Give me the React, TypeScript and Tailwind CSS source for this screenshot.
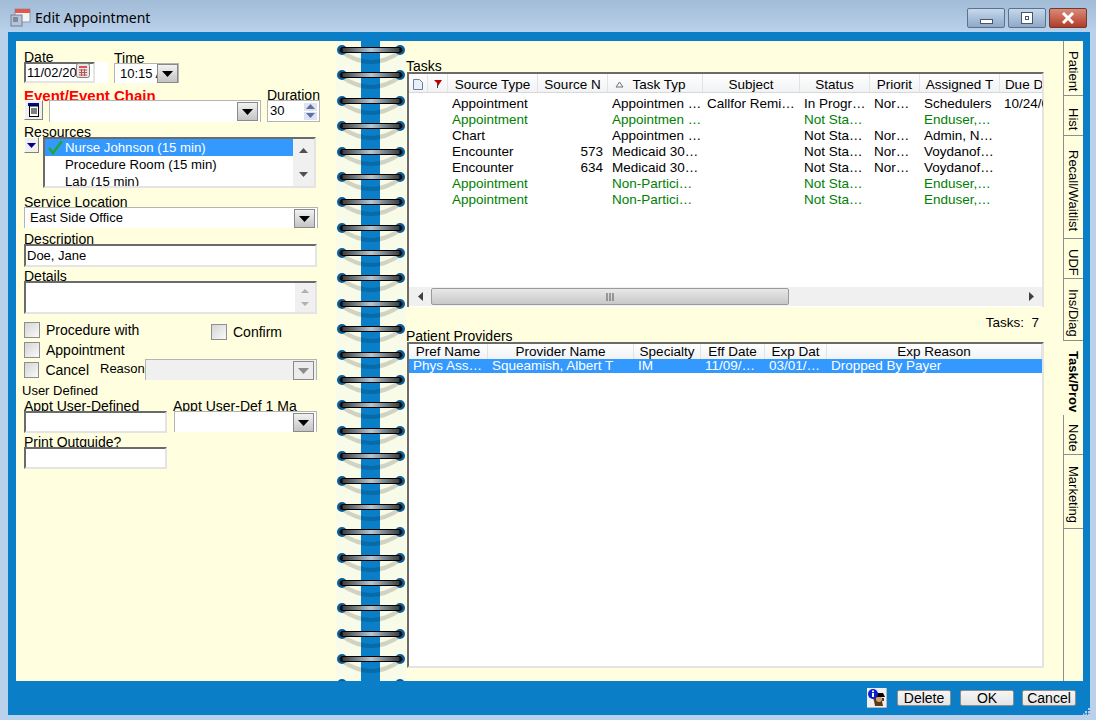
import type { ReactNode } from "react";

const sunken = "border-2 border-t-[#6b6b6b] border-l-[#6b6b6b] border-r-[#e4e4e4] border-b-[#e4e4e4] bg-white";

const taskCols = [
  { w: "w-[19px]" },
  { w: "w-[20px]" },
  { w: "w-[90px]", label: "Source Type" },
  { w: "w-[70px]", label: "Source N" },
  { w: "w-[95px]", label: "Task Typ" },
  { w: "w-[97px]", label: "Subject" },
  { w: "w-[70px]", label: "Status" },
  { w: "w-[50px]", label: "Priorit" },
  { w: "w-[80px]", label: "Assigned T" },
  { w: "w-[44px]", label: "Due D" },
];

const headPad: Record<string, string> = {
  "Task Typ": "pr-[9px]",
  "Due D": "pl-[5px]",
};

const black = "text-black";
const green = "text-[#008000]";

const taskRows = [
  { c: black, d: ["Appointment", "", "Appointmen …", "Callfor Remi…", "In Progr…", "Nor…", "Schedulers", "10/24/0"] },
  { c: green, d: ["Appointment", "", "Appointmen …", "", "Not Sta…", "", "Enduser,…", ""] },
  { c: black, d: ["Chart", "", "Appointmen …", "", "Not Sta…", "Nor…", "Admin, N…", ""] },
  { c: black, d: ["Encounter", "573", "Medicaid 30…", "", "Not Sta…", "Nor…", "Voydanof…", ""] },
  { c: black, d: ["Encounter", "634", "Medicaid 30…", "", "Not Sta…", "Nor…", "Voydanof…", ""] },
  { c: green, d: ["Appointment", "", "Non-Partici…", "", "Not Sta…", "", "Enduser,…", ""] },
  { c: green, d: ["Appointment", "", "Non-Partici…", "", "Not Sta…", "", "Enduser,…", ""] },
];

const provCols = [
  { w: "w-[79px]", label: "Pref Name", v: "Phys Ass…" },
  { w: "w-[146px]", label: "Provider Name", v: "Squeamish, Albert T" },
  { w: "w-[67px]", label: "Specialty", v: "IM" },
  { w: "w-[64px]", label: "Eff Date", v: "11/09/…" },
  { w: "w-[62px]", label: "Exp Dat", v: "03/01/…" },
  { w: "flex-1", label: "Exp Reason", v: "Dropped By Payer" },
];

const tabs = [
  { label: "Patient", h: "h-[55px]" },
  { label: "Hist", h: "h-[40px]" },
  { label: "Recall/Waitlist", h: "h-[103px]" },
  { label: "UDF", h: "h-[40px]" },
  { label: "Ins/Diag", h: "h-[62px]" },
  { label: "Task/Prov", h: "h-[74px]", active: true },
  { label: "Note", h: "h-[40px]" },
  { label: "Marketing", h: "h-[74px]" },
];

function Label({ children, className = "" }: { children: ReactNode; className?: string }) {
  return <div className={`h-[12px] text-[14px] leading-[15px] whitespace-nowrap ${className}`}>{children}</div>;
}

function DropButton({ disabled = false }: { disabled?: boolean }) {
  return (
    <div className={`flex h-[19px] w-[21px] shrink-0 items-center justify-center border border-[#8a8a8a] ${disabled ? "bg-[#ececec]" : "bg-gradient-to-b from-[#f2f2f2] to-[#c4c4c4]"}`}>
      <svg width="11" height="6" viewBox="0 0 11 6">
        <path d="M0 0h11L5.5 6z" fill={disabled ? "#8c8c8c" : "#000"} />
      </svg>
    </div>
  );
}

function Select({ className = "", value = "", disabled = false }: { className?: string; value?: string; disabled?: boolean }) {
  return (
    <div className={`relative z-10 flex items-end justify-between border border-[#b4b4b4] border-b-0 ${disabled ? "bg-[#f0f0f0]" : "bg-white"} ${className}`}>
      <span className="self-center pl-[5px] text-[13px]">{value}</span>
      <DropButton disabled={disabled} />
    </div>
  );
}

function Check({ label, className = "" }: { label?: string; className?: string }) {
  return (
    <div className={`flex items-center ${className}`}>
      <div className="h-[16px] w-[16px] border border-[#8e8e8e] bg-gradient-to-br from-[#d4d4d4] to-[#fafafa]" />
      {label && <span className="ml-[6px] text-[14px] leading-[16px]">{label}</span>}
    </div>
  );
}

function Ring() {
  return (
    <div className="h-[25.375px] shrink-0">
      <svg width="68" height="25" viewBox="0 0 68 25" className="block">
        <defs>
          <linearGradient id="bar" x1="0" x2="1" y1="0" y2="0">
            <stop offset="0" stopColor="#3a3a3a" />
            <stop offset="0.5" stopColor="#b4c8d4" />
            <stop offset="1" stopColor="#3a3a3a" />
          </linearGradient>
        </defs>
        <path d="M5 11 Q34 31 63 11" fill="none" stroke="#000" strokeOpacity="0.16" strokeWidth="4" />
        <circle cx="5" cy="9" r="5" fill="#0b5f96" />
        <circle cx="63" cy="9" r="5" fill="#0b5f96" />
        <circle cx="5" cy="9" r="2.5" fill="#111" />
        <circle cx="63" cy="9" r="2.5" fill="#111" />
        <rect x="5" y="6.5" width="58" height="5" fill="url(#bar)" stroke="#000" strokeWidth="1" />
      </svg>
    </div>
  );
}

function InfoIcon() {
  return (
    <svg width="20" height="20" viewBox="0 0 20 20" className="block">
      <rect width="20" height="20" fill="#f0f0f0" />
      <path d="M20 0v20H0" fill="none" stroke="#808080" />
      <path d="M6 10h11v3h-2l1 5H8l-1-5z" fill="#5a3a1c" />
      <circle cx="12" cy="11" r="3" fill="#d9a066" />
      <path d="M6 9h12l-2-4H9z" fill="#000" />
      <circle cx="6" cy="6" r="5" fill="#0a1fd0" />
      <rect x="5" y="5" width="2" height="4" fill="#fff" />
      <rect x="5" y="2.5" width="2" height="1.6" fill="#fff" />
    </svg>
  );
}

export default function App() {
  return (
    <div className="flex h-[720px] w-[1096px] flex-col overflow-hidden bg-[#b9d1ea] text-[13px] text-black [font-family:Liberation_Sans,Arial,sans-serif]">
      {/* title bar */}
      <div className="flex h-[32px] shrink-0 items-start bg-gradient-to-b from-[#a2bbd6] to-[#b9d1ea] pl-[10px] pr-[9px] pt-[8px]">
        <svg width="21" height="20" viewBox="0 0 21 20">
          <rect x="5" y="1" width="15" height="13" fill="#f4f4f4" stroke="#8a9ab0" />
          <rect x="5" y="1" width="15" height="4" fill="#e2574c" />
          <rect x="1" y="7" width="11" height="11" fill="#b8c4d4" stroke="#6f7f94" />
          <rect x="3" y="9" width="5" height="5" fill="#7d8b9e" />
        </svg>
        <span className="ml-[4px] text-[14px] leading-[20px] [font-family:Noto_Sans,sans-serif]">Edit Appointment</span>
        <div className="ml-auto flex gap-[3px]">
          <div className="flex h-[20px] w-[38px] items-end justify-center rounded-[2px] border border-[#5c7190] bg-gradient-to-b from-[#c6d8ec] to-[#8fa9c6] pb-[3px]">
            <div className="h-[5px] w-[13px] border border-[#45566e] bg-white" />
          </div>
          <div className="flex h-[20px] w-[38px] items-center justify-center rounded-[2px] border border-[#5c7190] bg-gradient-to-b from-[#c6d8ec] to-[#8fa9c6]">
            <div className="flex h-[12px] w-[12px] items-center justify-center border border-[#45566e] bg-white">
              <div className="h-[4px] w-[4px] border border-[#45566e]" />
            </div>
          </div>
          <div className="flex h-[20px] w-[38px] items-center justify-center rounded-[2px] border border-[#6e3a32] bg-gradient-to-b from-[#d98a78] to-[#b23a26]">
            <svg width="14" height="12" viewBox="0 0 14 12">
              <path d="M2 1l10 10M12 1L2 11" stroke="#fff" strokeWidth="3" />
            </svg>
          </div>
        </div>
      </div>

      {/* window body */}
      <div className="relative ml-[8px] mr-[6px] mb-[5px] flex flex-1 flex-col bg-[#0a7fc8] pt-[9px]">
        <div className="ml-[8px] mr-[7px] flex h-[640px] shrink-0 overflow-hidden bg-[#ffffdf]">
          {/* left form */}
          <div className="flex w-[320px] shrink-0 flex-col pl-[8px] pt-[9px]">
            <div className="flex">
              <div className="w-[90px]">
                <Label>Date</Label>
                <div className="flex">
                  <div className={`relative z-10 flex h-[21px] w-[71px] items-center pl-[1px] ${sunken}`}>
                    <span className="text-[13px]">11/02/20</span>
                    <svg width="14" height="15" viewBox="0 0 14 15" className="-ml-[1px] -mt-[4px] shrink-0">
                      <rect x="0.5" y="0.5" width="13" height="14" rx="2" fill="#e6e6e6" stroke="#808080" />
                      <rect x="3" y="3" width="8" height="2" fill="#d9534f" />
                      <path d="M3 7h8M3 9.500h8M3 12h8M5.500 6v7M8.500 6v7" stroke="#c05050" strokeWidth="1" />
                    </svg>
                  </div>
                  <div className="z-10 h-[21px] w-[13px] bg-white" />
                </div>
              </div>
              <div>
                <Label className="mt-[1px]">Time</Label>
                <div className="relative z-10 flex h-[20px] w-[65px] items-center justify-between border border-[#b4b4b4] border-b-0 bg-white pl-[5px]">
                  <span className="w-[37px] overflow-hidden whitespace-nowrap text-[13px]">10:15 AM</span>
                  <DropButton />
                </div>
              </div>
            </div>

            <div className="mt-[5px] flex">
              <div className="w-[243px]">
                <Label className="text-[15px] font-bold text-[#ff0000]">Event/Event Chain</Label>
                <div className="flex items-start">
                  <div className="relative z-10 flex h-[20px] w-[19px] items-center justify-center border border-white border-b-[#808080] border-r-[#808080] bg-[#f0f0f0]">
                    <svg width="13" height="14" viewBox="0 0 13 14">
                      <rect x="1" y="0" width="11" height="3" fill="#000a8c" />
                      <rect x="2.500" y="3" width="9" height="10.500" fill="#fff" stroke="#000" />
                      <path d="M4 6h6M4 8h6M4 10h6" stroke="#000" />
                    </svg>
                  </div>
                  <Select className="ml-[6px] h-[22px] w-[212px] pb-[1px] pr-[2px]" />
                </div>
              </div>
              <div>
                <Label>Duration</Label>
                <div className="relative z-10 flex h-[22px] w-[53px] items-center justify-between border border-[#b4b4b4] bg-white pl-[2px] pr-[2px]">
                  <span>30</span>
                  <div className="flex flex-col gap-[1px]">
                    <div className="flex h-[8px] w-[13px] items-center justify-center bg-[#dfe3ee]"><svg width="9" height="5"><path d="M0 5h9L4.500 0z" fill="#5d6fa8" /></svg></div>
                    <div className="flex h-[8px] w-[13px] items-center justify-center bg-[#dfe3ee]"><svg width="9" height="5"><path d="M0 0h9L4.500 5z" fill="#5d6fa8" /></svg></div>
                  </div>
                </div>
              </div>
            </div>

            <Label className="mt-[3px]">Resources</Label>
            <div className="flex items-start">
              <div className="relative z-10 flex h-[16px] w-[15px] items-center justify-center border border-white border-b-[#808080] border-r-[#808080] bg-[#f0f0f0]">
                <svg width="9" height="5"><path d="M0 0h9L4.500 5z" fill="#00008b" /></svg>
              </div>
              <div className="relative z-10 ml-[4px] flex h-[51px] w-[273px] overflow-hidden border-2 border-[#6b6b6b] border-b-[#e4e4e4] border-r-[#e4e4e4] bg-white">
                <div className="flex-1 text-[13.2px] leading-[17px]">
                  <div className="flex h-[17px] items-center bg-[#3399ff] text-white">
                    <svg width="17" height="15" viewBox="0 0 17 15" className="ml-[2px]">
                      <path d="M2 8l4 5L15 1" fill="none" stroke="#1fa82a" strokeWidth="2.500" />
                    </svg>
                    <span className="ml-[1px]">Nurse Johnson (15 min)</span>
                  </div>
                  <div className="pl-[20px]">Procedure Room (15 min)</div>
                  <div className="pl-[20px]">Lab (15 min)</div>
                </div>
                <div className="flex w-[21px] flex-col items-center justify-between bg-[#f0f0f0] py-[9px]">
                  <svg width="9" height="5"><path d="M0 5h9L4.500 0z" fill="#505050" /></svg>
                  <svg width="9" height="5"><path d="M0 0h9L4.500 5z" fill="#505050" /></svg>
                </div>
              </div>
            </div>

            <Label className="mt-[7px]">Service Location</Label>
            <Select className="h-[21px] w-[294px] pr-[2px]" value="East Side Office" />

            <Label className="mt-[4px]">Description</Label>
            <div className={`relative z-10 flex h-[23px] w-[293px] items-center pl-[1px] ${sunken}`}>Doe, Jane</div>

            <Label className="mt-[2px]">Details</Label>
            <div className={`relative z-10 flex h-[33px] w-[293px] justify-end ${sunken}`}>
              <div className="flex w-[20px] flex-col items-center justify-between bg-[#f0f0f0] py-[6px]">
                <svg width="8" height="4"><path d="M0 4h8L4 0z" fill="#b0b0b0" /></svg>
                <svg width="8" height="4"><path d="M0 0h8L4 4z" fill="#b0b0b0" /></svg>
              </div>
            </div>

            <div className="mt-[8px] flex">
              <div className="w-[187px]">
                <Check label="Procedure with" />
                <Check label="Appointment" className="mt-[4px]" />
              </div>
              <Check label="Confirm" className="mt-[2px] self-start" />
            </div>
            <div className="mt-[1px] flex items-start">
              <Check label="Cancel" className="mt-[3px] w-[65px]" />
              <span className="ml-[11px] mt-[2px] w-[45px] overflow-hidden whitespace-nowrap text-[13px] leading-[16px]">Reason</span>
              <Select disabled className="h-[21px] w-[172px] pr-[2px]" />
            </div>

            <div className="-ml-[2px] mt-[3px] h-[15px] text-[13px] leading-[15px]">User Defined</div>

            <div className="mt-[1px] flex">
              <div className="w-[149px]">
                <Label>Appt User-Defined</Label>
                <div className={`relative z-10 h-[22px] w-[143px] ${sunken}`} />
              </div>
              <div>
                <Label>Appt User-Def 1 Ma</Label>
                <Select className="ml-[1px] h-[21px] w-[143px] pr-[2px]" />
              </div>
            </div>

            <Label className="mt-[2px]">Print Outguide?</Label>
            <div className={`relative z-10 h-[22px] w-[143px] ${sunken}`} />
          </div>

          {/* notebook spine */}
          <div className="relative flex w-[70px] shrink-0 bg-[#f8fbe8]">
            <div className="ml-[25px] h-full w-[19px] bg-[#0a7fc8]" />
            <div className="absolute left-[1px] top-0 flex flex-col">
              {Array.from({ length: 26 }).map((_, i) => (
                <Ring key={i} />
              ))}
            </div>
          </div>

          {/* tasks + providers */}
          <div className="flex w-[657px] shrink-0 flex-col pt-[19px]">
            <div className="h-[12px] text-[14px] leading-[12px]">Tasks</div>
            <div className="relative z-10 ml-[1px] flex h-[235px] w-[637px] flex-col border-2 border-b-0 border-[#6b6b6b] border-r-[#e4e4e4] bg-white">
              <div className="flex h-[19px] shrink-0 overflow-hidden border-b border-[#d8d8d8] bg-gradient-to-b from-white to-[#f1f2f4] text-[13.5px] leading-[19px]">
                {taskCols.map((col, i) => (
                  <div key={i} className={`flex shrink-0 items-center justify-center overflow-hidden whitespace-nowrap border-r border-[#e2e3e5] pt-[2px] ${col.w} ${headPad[col.label ?? ""] ?? ""}`}>
                    {i === 0 && (
                      <svg width="10" height="11" viewBox="0 0 10 11">
                        <path d="M.500.500h6l3 3v7h-9z" fill="#e8effa" stroke="#6f7f9c" />
                      </svg>
                    )}
                    {i === 1 && (
                      <svg width="10" height="11" viewBox="0 0 10 11">
                        <path d="M1 1h8L7 4 5 7 4 4z" fill="#c00000" />
                        <path d="M4.500 4v5" stroke="#404040" />
                      </svg>
                    )}
                    {col.label === "Task Typ" && (
                      <svg width="9" height="7" viewBox="0 0 9 7" className="mr-[8px]">
                        <path d="M4.500 1L8 6H1z" fill="none" stroke="#707070" />
                      </svg>
                    )}
                    {col.label}
                  </div>
                ))}
              </div>
              <div className="flex-1 pt-[3px] text-[13.5px] leading-[16px]">
                {taskRows.map((row, r) => (
                  <div key={r} className={`flex h-[16px] pl-[38px] ${row.c}`}>
                    {row.d.map((val, i) => (
                      <div key={i} className={`shrink-0 overflow-hidden whitespace-nowrap ${taskCols[i + 2].w} ${i === 1 ? "pr-[4px] text-right" : "pl-[5px]"}`}>
                        {val}
                      </div>
                    ))}
                  </div>
                ))}
              </div>
              <div className="mb-[1px] flex h-[19px] shrink-0 items-center bg-[#f0f0f0]">
                <div className="flex w-[22px] items-center justify-center">
                  <svg width="5" height="9"><path d="M5 0v9L0 4.500z" fill="#404040" /></svg>
                </div>
                <div className="flex h-[17px] w-[358px] items-center justify-center rounded-[2px] border border-[#9a9a9a] bg-gradient-to-b from-[#e8e8e8] to-[#c8c8c8]">
                  <svg width="9" height="8"><path d="M1 0v8M4 0v8M7 0v8" stroke="#555" /></svg>
                </div>
                <div className="ml-auto flex w-[22px] items-center justify-center">
                  <svg width="5" height="9"><path d="M0 0v9l5-4.500z" fill="#404040" /></svg>
                </div>
              </div>
            </div>

            <div className="h-[23px] w-[633px] pt-[8px] text-right text-[13.5px] leading-[15px]">Tasks:&nbsp; 7</div>
            <div className="h-[12px] whitespace-nowrap text-[14px] leading-[12px]">Patient Providers</div>
            <div className="relative z-10 ml-[1px] flex h-[326px] w-[637px] flex-col border-2 border-[#6b6b6b] border-b-[#e4e4e4] border-r-[#e4e4e4] bg-white">
              <div className="flex h-[15px] shrink-0 overflow-hidden bg-gradient-to-b from-white to-[#f1f2f4] text-[13.5px]">
                {provCols.map((col) => (
                  <div key={col.label} className={`h-[15px] overflow-hidden whitespace-nowrap border-r border-[#e2e3e5] text-center leading-[15px] ${col.w}`}>
                    {col.label}
                  </div>
                ))}
              </div>
              <div className="flex h-[14px] shrink-0 bg-[#3399ff] text-[13.5px] leading-[14px] text-white">
                {provCols.map((col) => (
                  <div key={col.label} className={`overflow-hidden whitespace-nowrap pl-[4px] ${col.w}`}>
                    {col.v}
                  </div>
                ))}
              </div>
            </div>
          </div>

          {/* side tabs */}
          <div className="flex w-[20px] shrink-0 flex-col">
            {tabs.map((tab) => (
              <div
                key={tab.label}
                className={`flex w-[20px] shrink-0 items-start justify-center text-[13px] leading-[20px] [writing-mode:vertical-rl] ${tab.h} ${tab.active ? "font-bold" : "border-b border-l border-[#8e8e8e]"}`}
              >
                <span className="pt-[7px]">{tab.label}</span>
              </div>
            ))}
            <div className="flex-1 border-l border-[#8e8e8e]" />
          </div>
        </div>

        {/* footer buttons */}
        <div className="flex flex-1 items-center pl-[859px]">
          <InfoIcon />
          <button className="ml-[10px] h-[16px] w-[54px] rounded-[2px] border border-[#8e8e8e] bg-gradient-to-b from-[#f6f6f6] to-[#e4e4e4] text-[14px] leading-[14px]">Delete</button>
          <button className="ml-[9px] h-[16px] w-[54px] rounded-[2px] border border-[#8e8e8e] bg-gradient-to-b from-[#f6f6f6] to-[#e4e4e4] text-[14px] leading-[14px]">OK</button>
          <button className="ml-[8px] h-[16px] w-[54px] rounded-[2px] border border-[#8e8e8e] bg-gradient-to-b from-[#f6f6f6] to-[#e4e4e4] text-[14px] leading-[14px]">Cancel</button>
        </div>
        <svg width="7" height="7" viewBox="0 0 7 7" className="absolute bottom-0 right-0">
          <path d="M5 0h2v2H5zM2 3h2v2H2zM5 3h2v2H5zM0 5.500h1.500V7H0zM2.500 5.500H4V7H2.500zM5 5.500h2V7H5z" fill="#b9d1ea" />
        </svg>
      </div>
    </div>
  );
}
